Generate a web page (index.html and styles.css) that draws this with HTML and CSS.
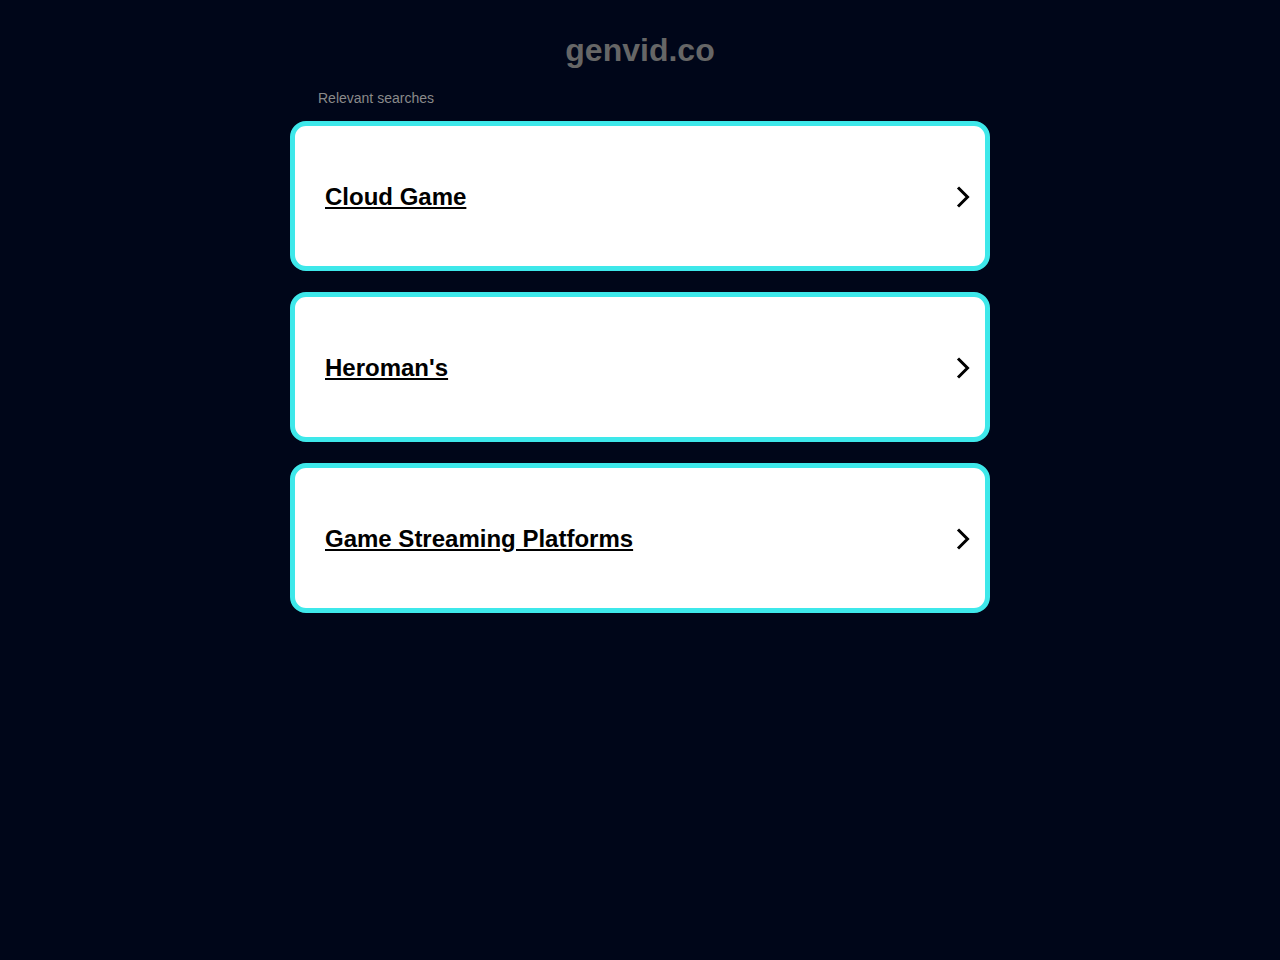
FILE: index.html
```html
<!DOCTYPE html>
<html lang="en">
<head>
    <meta charset="UTF-8">
    <meta name="viewport" content="width=device-width, initial-scale=1.0">
    <title>genvid.co</title>
    <link rel="stylesheet" href="styles.css">
</head>
<body>
    <div class="container">
        <div class="header">
            <div class="domain">genvid.co</div>
        </div>

        <div class="searches">
            <div class="searches-title">Relevant searches</div>

            <a class="search-card" href="#">
                <span class="search-text">Cloud Game</span>
                <svg class="chevron" viewBox="0 0 16 24" width="16" height="24">
                    <path d="M3 2.5l9.5 9.5-9.5 9.5" />
                </svg>
            </a>

            <a class="search-card" href="#">
                <span class="search-text">Heroman's</span>
                <svg class="chevron" viewBox="0 0 16 24" width="16" height="24">
                    <path d="M3 2.5l9.5 9.5-9.5 9.5" />
                </svg>
            </a>

            <a class="search-card" href="#">
                <span class="search-text">Game Streaming Platforms</span>
                <svg class="chevron" viewBox="0 0 16 24" width="16" height="24">
                    <path d="M3 2.5l9.5 9.5-9.5 9.5" />
                </svg>
            </a>
        </div>
    </div>
</body>
</html>
```

FILE: styles.css
```css
* {
    margin: 0;
    padding: 0;
    box-sizing: border-box;
}

body {
    font-family: Arial, "Liberation Sans", sans-serif;
    background: #000619;
    min-height: 100vh;
}

.container {
    width: 700px;
    margin: 0 auto;
}

.header {
    text-align: center;
    padding-top: 32px;
    height: 88px;
}

.domain {
    font-size: 32px;
    font-weight: bold;
    color: #666666;
    line-height: 37px;
}

.searches-title {
    font-size: 14px;
    color: #8a8a8a;
    padding-left: 28px;
    line-height: 20px;
    margin-bottom: 13px;
}

.search-card {
    display: flex;
    align-items: center;
    justify-content: space-between;
    height: 150px;
    margin-bottom: 21px;
    padding: 2px 14px 0 30px;
    background: #ffffff;
    border: 5px solid #3ee8ea;
    border-radius: 16px;
    color: #000000;
    text-decoration: none;
}

.search-text {
    font-size: 24px;
    font-weight: bold;
    text-decoration: underline;
}

.chevron {
    fill: none;
    stroke: #000000;
    stroke-width: 3;
    stroke-linecap: butt;
    stroke-linejoin: miter;
}
```
